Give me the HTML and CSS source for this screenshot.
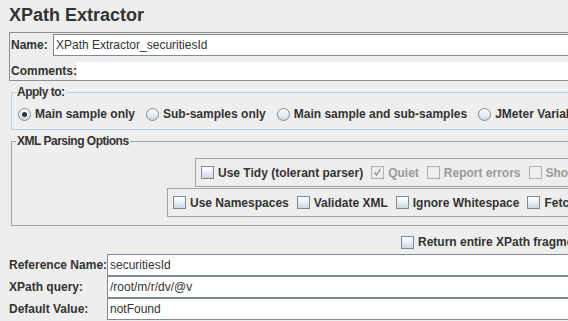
FILE: index.html
```html
<!DOCTYPE html>
<html lang="en">
<head>
    <meta charset="UTF-8">
    <title>XPath Extractor</title>
    <link rel="stylesheet" href="styles.css">
</head>
<body>
    <div class="page">
        <h1 class="title">XPath Extractor</h1>

        <div class="name-panel">
            <div class="name-row">
                <label class="name-label">Name:</label>
                <div class="field">XPath Extractor_securitiesId</div>
            </div>
            <div class="comments-row">
                <label class="comments-label">Comments:</label>
                <div class="area"></div>
            </div>
        </div>

        <fieldset class="group apply">
            <legend>Apply to:</legend>
            <div class="options">
                <span class="opt"><span class="radio on"></span>Main sample only</span>
                <span class="opt"><span class="radio"></span>Sub-samples only</span>
                <span class="opt"><span class="radio"></span>Main sample and sub-samples</span>
                <span class="opt"><span class="radio"></span>JMeter Variable</span>
            </div>
        </fieldset>

        <fieldset class="group xml">
            <legend>XML Parsing Options</legend>
            <div class="xml-box tidy">
                <span class="opt"><span class="box"></span>Use Tidy (tolerant parser)</span>
                <span class="opt off"><span class="box checked">
                    <svg width="11" height="11" viewBox="0 0 11 11"><path d="M2.5 5.5 L4.5 8 L8.5 2" fill="none" stroke="#8a8a8a" stroke-width="1.3"/></svg>
                </span>Quiet</span>
                <span class="opt off"><span class="box"></span>Report errors</span>
                <span class="opt off"><span class="box"></span>Show warnings</span>
            </div>
            <div class="xml-box ns">
                <span class="opt"><span class="box"></span>Use Namespaces</span>
                <span class="opt"><span class="box"></span>Validate XML</span>
                <span class="opt"><span class="box"></span>Ignore Whitespace</span>
                <span class="opt"><span class="box"></span>Fetch external DTDs</span>
            </div>
        </fieldset>

        <div class="return-row">
            <span class="opt"><span class="box"></span>Return entire XPath fragment instead of text content?</span>
        </div>

        <div class="form">
            <div class="form-row">
                <label class="form-label">Reference Name:</label>
                <div class="field">securitiesId</div>
            </div>
            <div class="form-row">
                <label class="form-label">XPath query:</label>
                <div class="field">/root/m/r/dv/@v</div>
            </div>
            <div class="form-row">
                <label class="form-label">Default Value:</label>
                <div class="field">notFound</div>
            </div>
        </div>
    </div>
</body>
</html>
```

FILE: styles.css
```css
body {
    margin: 0;
    background: #eeeeee;
    font-family: "Liberation Sans", Arial, sans-serif;
    font-size: 12px;
    color: #333333;
    overflow: hidden;
}
.page {
    width: 800px;
    padding-left: 9px;
}
.title {
    margin: 0;
    padding: 4px 0 6px;
    font-size: 18px;
    line-height: 22px;
    font-weight: bold;
}
label {
    font-weight: bold;
    white-space: nowrap;
}
.field {
    flex: 1;
    height: 22px;
    box-sizing: border-box;
    border: 1px solid #7a8a99;
    background: #fff;
    padding-left: 2px;
    line-height: 20px;
    white-space: nowrap;
}
.name-panel {
    border: 1px solid #8f8f8f;
    border-right: none;
    padding: 1px 0 0 1px;
}
.name-row,
.comments-row,
.form-row {
    display: flex;
    align-items: center;
}
.name-label {
    width: 42px;
}
.comments-row {
    margin-top: 6px;
    height: 18px;
}
.comments-label {
    width: 66px;
}
.area {
    flex: 1;
    height: 18px;
    background: #fff;
}
.group {
    margin: 4px 0 0 2px;
    padding: 0;
    border: 1px solid #a3a3a3;
    border-right: none;
    min-width: 0;
}
.group legend {
    margin-left: 4px;
    padding: 0 1px;
    font-size: 12px;
    letter-spacing: -0.5px;
    line-height: 14px;
    font-weight: bold;
}
.apply {
    border-color: #b8cfe5;
    padding: 5px 0 5px 0;
}
.options {
    display: flex;
    align-items: center;
    height: 20px;
    padding-left: 6px;
    gap: 11px;
}
.opt {
    display: flex;
    align-items: center;
    font-weight: bold;
    white-space: nowrap;
}
.opt.off {
    color: #999999;
}
.radio {
    width: 13px;
    height: 13px;
    box-sizing: border-box;
    border: 1px solid #7a8a99;
    border-radius: 50%;
    background: linear-gradient(#ffffff, #e4ebf2 55%, #c8d6e4);
    margin-right: 4px;
    display: flex;
    align-items: center;
    justify-content: center;
}
.radio.on::after {
    content: "";
    width: 5px;
    height: 5px;
    border-radius: 50%;
    background: #333333;
}
.box {
    width: 13px;
    height: 13px;
    box-sizing: border-box;
    border: 1px solid #7a8a99;
    background: linear-gradient(#ffffff, #e4ebf2 55%, #c8d6e4);
    margin-right: 4px;
    display: flex;
    align-items: center;
    justify-content: center;
}
.off .box {
    border-color: #b0b0b0;
    background: #eeeeee;
}
.xml {
    padding: 10px 0 8px 0;
}
.xml-box {
    display: flex;
    align-items: center;
    gap: 8px;
    height: 29px;
    box-sizing: border-box;
    border: 1px solid #a3a3a3;
    border-right: none;
    padding-left: 5px;
}
.tidy {
    margin-left: 183px;
}
.ns {
    margin-left: 155px;
    margin-top: 1px;
}
.return-row {
    display: flex;
    align-items: center;
    height: 24px;
    padding: 4px 0 0 392px;
}
.form-row {
    height: 22px;
}
.form-label {
    width: 98px;
}
```
